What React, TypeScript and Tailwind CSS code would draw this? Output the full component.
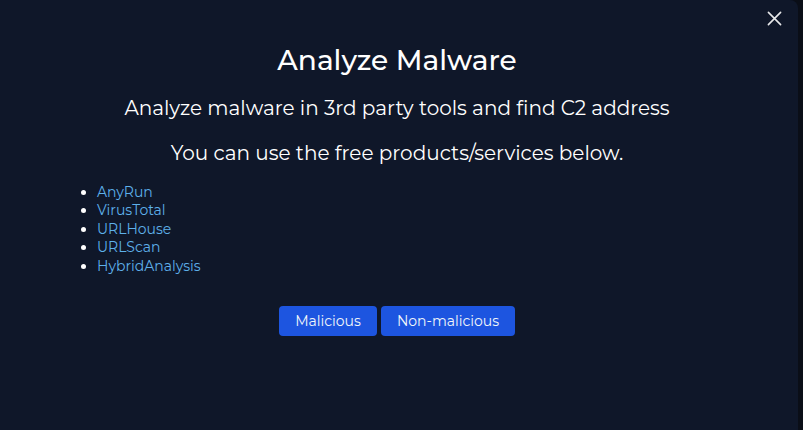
import React from 'react';

const links = ['AnyRun', 'VirusTotal', 'URLHouse', 'URLScan', 'HybridAnalysis'];

const App: React.FC = () => {
    return (
        <div className="w-[803px] h-[430px] bg-[#0a0e17] font-['Montserrat','DejaVu_Sans',sans-serif] overflow-hidden">
            <div className="relative w-[798px] h-[430px] bg-[#0f1729] rounded-tr-lg text-white pr-[4px]">
                <button className="absolute top-[11px] right-[16px] text-white/90" aria-label="Close">
                    <svg xmlns="http://www.w3.org/2000/svg" viewBox="0 0 16 16" fill="none" stroke="currentColor" strokeWidth={1.7} className="w-[15px] h-[15px]">
                        <path strokeLinecap="round" d="M1.5 1.5l13 13M14.5 1.5l-13 13" />
                    </svg>
                </button>

                <div className="flex flex-col items-center pt-[40px]">
                    <h1 className="text-[28px] leading-[40px] font-medium">Analyze Malware</h1>
                    <p className="mt-[14px] text-[20px] leading-[28px]">Analyze malware in 3rd party tools and find C2 address</p>
                    <p className="mt-[17px] text-[20px] leading-[28px]">You can use the free products/services below.</p>
                </div>

                <ul className="list-disc mt-[16px] ml-[97px] text-[14px] leading-[18.4px] marker:text-white">
                    {links.map((name) => (
                        <li key={name}>
                            <a href="#" className="text-[#5eb0ea]">{name}</a>
                        </li>
                    ))}
                </ul>

                <div className="flex justify-center gap-1 mt-[31px]">
                    <button className="h-[30px] w-[98px] rounded bg-[#1d55e0] text-[14px] text-slate-100">Malicious</button>
                    <button className="h-[30px] w-[134px] rounded bg-[#1d55e0] text-[14px] text-slate-100">Non-malicious</button>
                </div>
            </div>
        </div>
    );
};

export default App;
